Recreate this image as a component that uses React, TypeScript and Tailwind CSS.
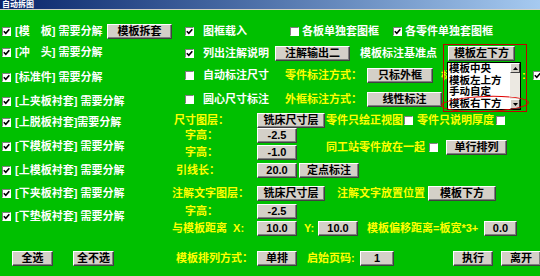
import type { ReactNode } from 'react'

type BtnProps = {
  className: string
  children: ReactNode
}

function Btn({ className, children }: BtnProps) {
  return (
    <div
      className={`flex h-[15px] shrink-0 items-center justify-center border border-t-white border-l-white border-r-[#404040] border-b-[#404040] bg-[#d4d0c8] text-[11px] font-bold leading-none text-black shadow-[inset_-1px_-1px_0_#808080] ${className}`}
    >
      {children}
    </div>
  )
}

function Check({ checked = false }: { checked?: boolean }) {
  return (
    <span className="flex h-[9px] w-[9px] shrink-0 items-center justify-center border border-t-[#808080] border-l-[#808080] border-b-white border-r-white bg-white">
      {checked ? (
        <svg width="7" height="7" viewBox="0 0 7 7" aria-hidden>
          <path d="M0.8 3.2 L2.8 5.3 L6.3 1.2" stroke="#000" strokeWidth="1.6" fill="none" />
        </svg>
      ) : null}
    </span>
  )
}

const PARTS = [
  { label: '[上夹板衬套] 需要分解', mt: 'mt-[8px]' },
  { label: '[上脱板衬套]需要分解', mt: 'mt-[5px]' },
  { label: '[下模板衬套] 需要分解', mt: 'mt-[8px]' },
  { label: '[上模板衬套] 需要分解', mt: 'mt-[8px]' },
  { label: '[下夹板衬套] 需要分解', mt: 'mt-[7px]' },
  { label: '[下垫板衬套] 需要分解', mt: 'mt-[7px]' },
]

function LeftColumn() {
  return (
    <div className="flex w-[172px] shrink-0 flex-col pt-[13px] text-white">
      <div className="flex h-[16px] items-center gap-[4px] pl-[2px]">
        <Check checked />
        <span className="w-[92px] whitespace-pre">[模　板] 需要分解</span>
        <Btn className="w-[65px]">模板拆套</Btn>
      </div>
      <div className="mt-[5px] flex h-[16px] items-center gap-[4px] pl-[2px]">
        <Check checked />
        <span className="whitespace-pre">[冲　头] 需要分解</span>
      </div>
      <div className="mt-[9px] flex h-[16px] items-center gap-[4px] pl-[2px]">
        <Check checked />
        <span className="whitespace-pre">[标准件] 需要分解</span>
      </div>
      {PARTS.map((p) => (
        <div key={p.label} className={`flex h-[16px] items-center gap-[4px] pl-[2px] ${p.mt}`}>
          <Check checked />
          <span className="whitespace-pre">{p.label}</span>
        </div>
      ))}
      <div className="mt-[27px] flex items-center gap-[20px] pl-[12px]">
        <Btn className="w-[41px]">全选</Btn>
        <Btn className="w-[41px]">全不选</Btn>
      </div>
    </div>
  )
}

function RightArea() {
  return (
    <div className="flex min-w-0 flex-1 flex-col pt-[13px] text-white">
      {/* 图框 */}
      <div className="flex h-[16px] items-center pl-[13px]">
        <div className="flex w-[105px] items-center gap-[9px]">
          <Check checked />
          <span>图框载入</span>
        </div>
        <div className="flex w-[103px] items-center gap-[3px]">
          <Check />
          <span>各板单独套图框</span>
        </div>
        <div className="flex items-center gap-[3px]">
          <Check checked />
          <span>各零件单独套图框</span>
        </div>
      </div>

      <div className="mt-[7px] flex h-[15px] items-center pl-[13px]">
        <div className="flex w-[90px] items-center gap-[9px]">
          <Check checked />
          <span>列出注解说明</span>
        </div>
        <Btn className="w-[75px]">注解输出二</Btn>
        <span className="ml-[10px] w-[88px] shrink-0">模板标注基准点</span>
        <Btn className="w-[67px]">模板左下方</Btn>
      </div>

      <div className="mt-[7px] flex h-[15px] items-center pl-[13px]">
        <div className="flex w-[100px] shrink-0 items-center gap-[9px]">
          <Check />
          <span>自动标注尺寸</span>
        </div>
        <span className="w-[82px] shrink-0 text-[#ffff00]">零件标注方式：</span>
        <Btn className="w-[66px]">只标外框</Btn>
        {/* label mostly hidden behind the open list */}
        <span className="ml-[8px] w-[6px] shrink-0 overflow-hidden text-[#ffff00]">标</span>
        <span className="w-[75px] shrink-0" />
        <span className="w-[11px] shrink-0 text-[#ffff00]">:</span>
        <Check checked />
      </div>

      <div className="mt-[9px] flex h-[15px] items-center pl-[13px]">
        <div className="flex w-[100px] shrink-0 items-center gap-[9px]">
          <Check />
          <span>圆心尺寸标注</span>
        </div>
        <span className="w-[82px] shrink-0 text-[#ffff00]">外框标注方式：</span>
        <Btn className="w-[75px]">线性标注</Btn>
      </div>

      {/* 尺寸 */}
      <div className="mt-[6px] flex text-[#ffff00]">
        <div className="flex w-[154px] shrink-0 flex-col">
          <div className="flex h-[15px] items-center">
            <span className="w-[85px] shrink-0 pl-[2px]">尺寸图层：</span>
            <Btn className="w-[68px]">铣床尺寸层</Btn>
          </div>
          <div className="flex h-[15px] items-center">
            <span className="w-[85px] shrink-0 pl-[13px]">字高：</span>
            <Btn className="w-[40px]">-2.5</Btn>
          </div>
          <div className="mt-[2px] flex h-[15px] items-center">
            <span className="w-[85px] shrink-0 pl-[13px]">字高：</span>
            <Btn className="w-[40px]">-1.0</Btn>
          </div>
          <div className="mt-[3px] flex h-[15px] items-center">
            <span className="w-[85px] shrink-0 pl-[4px]">引线长：</span>
            <Btn className="w-[40px]">20.0</Btn>
            <Btn className="ml-[2px] w-[60px]">定点标注</Btn>
          </div>
        </div>
        <div className="flex min-w-0 flex-1 flex-col">
          <div className="flex h-[15px] items-center">
            <span className="w-[78px] shrink-0">零件只绘正视图</span>
            <Check />
            <span className="ml-[4px] w-[79px] shrink-0">零件只说明厚度</span>
            <Check />
          </div>
          <div className="mt-[12px] flex h-[15px] items-center">
            <span className="w-[103px] shrink-0">同工站零件放在一起</span>
            <Check />
            <Btn className="ml-[8px] w-[61px]">单行排列</Btn>
          </div>
        </div>
      </div>

      {/* 注解 */}
      <div className="mt-[8px] flex h-[15px] items-center text-[#ffff00]">
        <span className="w-[85px] shrink-0">注解文字图层：</span>
        <Btn className="w-[68px]">铣床尺寸层</Btn>
        <span className="ml-[12px] w-[91px] shrink-0">注解文字放置位置</span>
        <Btn className="w-[68px]">模板下方</Btn>
      </div>
      <div className="mt-[3px] flex h-[15px] items-center text-[#ffff00]">
        <span className="w-[85px] shrink-0 pl-[13px]">字高：</span>
        <Btn className="w-[40px]">-2.5</Btn>
      </div>
      <div className="mt-[2px] flex h-[15px] items-center text-[#ffff00]">
        <span className="w-[85px] shrink-0 whitespace-pre">与模板距离  X:</span>
        <Btn className="w-[40px]">10.0</Btn>
        <span className="ml-[7px] w-[14px] shrink-0">Y:</span>
        <Btn className="w-[40px]">10.0</Btn>
        <span className="ml-[9px] w-[117px] shrink-0">模板偏移距离=板宽*3+</span>
        <Btn className="w-[33px]">0.0</Btn>
      </div>

      <div className="mt-[15px] flex h-[15px] items-center text-[#ffff00]">
        <span className="w-[85px] shrink-0 pl-[4px]">模板排列方式：</span>
        <Btn className="w-[40px]">单排</Btn>
        <span className="ml-[10px] w-[53px] shrink-0">启始页码:</span>
        <Btn className="w-[34px]">1</Btn>
        <Btn className="ml-[59px] w-[40px]">执行</Btn>
        <Btn className="ml-[8px] w-[40px]">离开</Btn>
      </div>
    </div>
  )
}

function DropList() {
  const items = ['模板中央', '模板左上方', '手动自定', '模板右下方']
  return (
    <div className="absolute left-[447px] top-[62px] flex h-[48px] w-[74px] border border-black bg-white">
      <div className="flex flex-1 flex-col pl-[1px] text-[10.5px] text-black">
        {items.map((it) => (
          <span key={it} className="h-[11.5px] leading-[11.5px]">
            {it}
          </span>
        ))}
      </div>
      <div className="flex w-[10px] flex-col bg-[#ece9e2]">
        <div className="flex h-[10px] items-center justify-center border border-t-white border-l-white border-r-[#404040] border-b-[#404040] bg-[#d4d0c8]">
          <svg width="5" height="3" viewBox="0 0 5 3" aria-hidden>
            <path d="M2.5 0 L5 3 L0 3 Z" fill="#000" />
          </svg>
        </div>
        <div className="flex-1" />
        <div className="flex h-[10px] items-center justify-center border border-t-white border-l-white border-r-[#404040] border-b-[#404040] bg-[#d4d0c8]">
          <svg width="5" height="3" viewBox="0 0 5 3" aria-hidden>
            <path d="M0 0 L5 0 L2.5 3 Z" fill="#000" />
          </svg>
        </div>
      </div>
    </div>
  )
}

export default function App() {
  return (
    <div className="relative h-[276px] w-[540px] overflow-hidden whitespace-nowrap bg-[#00c000] font-['Liberation_Sans','Noto_Sans_CJK_SC',sans-serif] text-[11px] font-bold leading-none">
      <div className="flex h-[10px] items-center border-b border-[#d4d0c8] bg-linear-to-r from-[#0a246a] to-[#a6caf0] px-[2px] text-[8px] text-white">
        自动拆图
      </div>
      <div className="flex">
        <LeftColumn />
        <RightArea />
      </div>
      <DropList />
      <div className="absolute left-[443px] top-[44px] h-[68px] w-[84px] border border-[#c00000]" />
      <div className="absolute left-[441px] top-[96px] h-[16px] w-[88px] -rotate-2 rounded-[50%] border border-[#e00000]" />
    </div>
  )
}
